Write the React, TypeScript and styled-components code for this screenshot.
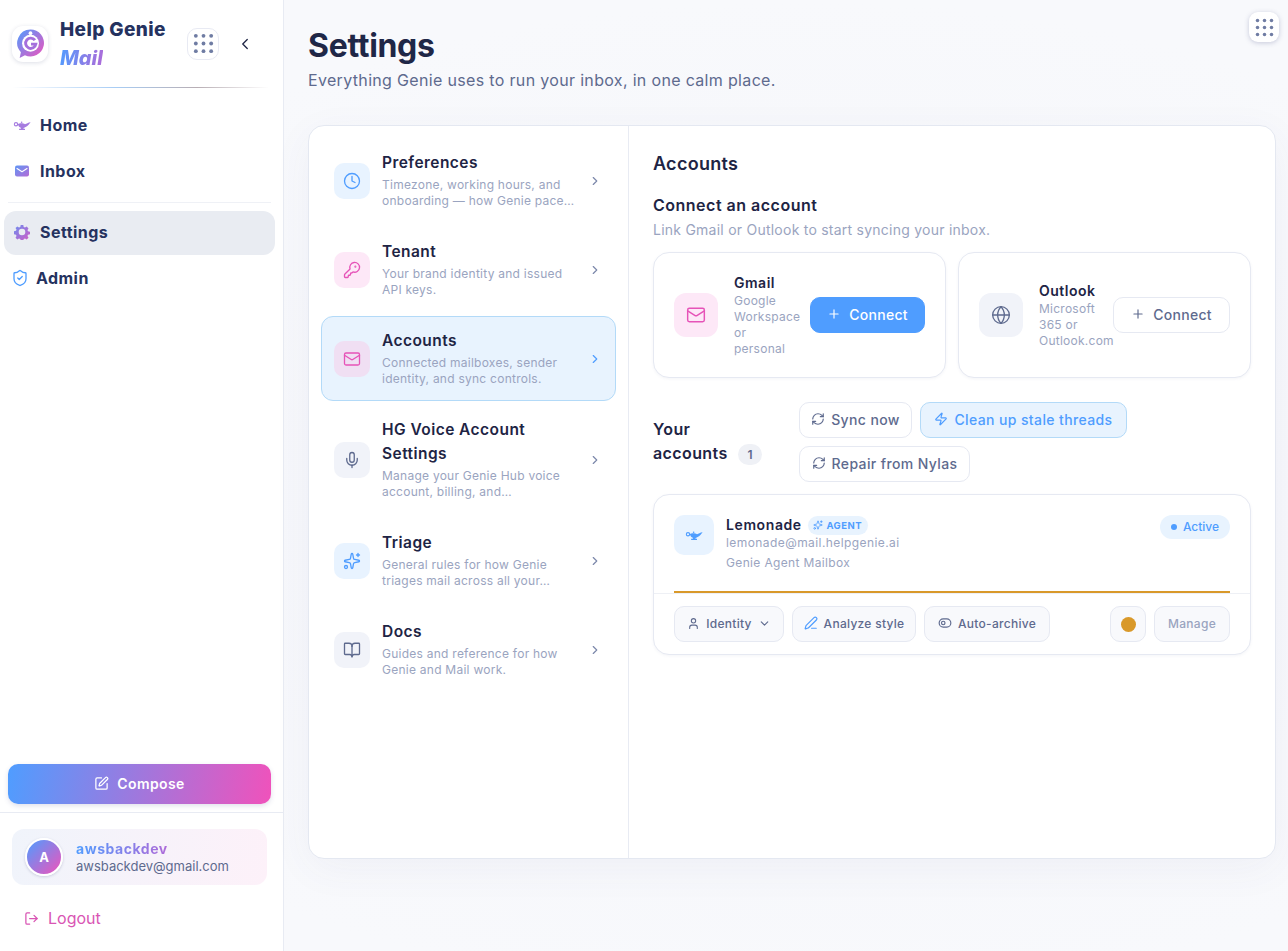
import React from "react";
import styled, { createGlobalStyle, css } from "styled-components";
import {
  BookOpen, ChevronDown, ChevronLeft, ChevronRight, Clock, Globe, KeyRound, LogOut, Mail, Mic,
  PenLine, Plus, RefreshCw, ShieldCheck, Sparkles, SquarePen, ToggleLeft, User, Zap,
} from "lucide-react";

const GlobalStyle = createGlobalStyle`
  html, body { margin: 0; padding: 0; background: #f8f9fc; }
  body { font-family: "Inter", "Liberation Sans", sans-serif; color: #1e2444; }
  * { box-sizing: border-box; }
`;

const gradientText = css`
  background: linear-gradient(100deg, #4f9dff, #b06ad8);
  -webkit-background-clip: text;
  background-clip: text;
  color: transparent;
`;

const Page = styled.div`
  display: flex;
  width: 1288px;
  height: 951px;
  overflow: hidden;
  position: relative;
  background: radial-gradient(900px 500px at 800px 500px, #f4f5fa 0%, #f8f9fc 100%);
`;
const Sidebar = styled.aside`
  width: 284px;
  flex: none;
  display: flex;
  flex-direction: column;
  background: #fff;
  border-right: 1px solid #e8ebf3;
`;
const BrandRow = styled.div`
  height: 87px;
  display: flex;
  align-items: center;
  padding-left: 12px;
`;
const LogoBox = styled.div`
  width: 36px;
  height: 36px;
  border-radius: 11px;
  background: #fff;
  box-shadow: 0 1px 4px rgba(40, 50, 100, 0.16);
  display: flex;
  align-items: center;
  justify-content: center;
  flex: none;
`;
const BrandText = styled.div`
  width: 115px;
  margin-left: 12px;
  display: flex;
  flex-direction: column;
  gap: 2px;
`;
const BrandName = styled.div`
  font-size: 19px;
  line-height: 26px;
  font-weight: 800;
  color: #25325f;
  letter-spacing: 0.4px;
  white-space: nowrap;
`;
const BrandSub = styled.div`
  font-size: 20px;
  line-height: 26px;
  font-weight: 800;
  font-style: italic;
  ${gradientText}
  width: max-content;
`;
const GridButton = styled.button`
  width: 32px;
  height: 32px;
  margin-left: 12px;
  padding: 0;
  border-radius: 10px;
  border: 1px solid #e8eaf3;
  background: #fff;
  color: #6f7ca3;
  display: flex;
  align-items: center;
  justify-content: center;
  flex: none;
`;
const BackButton = styled.button`
  width: 28px;
  height: 28px;
  margin-left: 12px;
  padding: 0;
  border: 0;
  background: none;
  color: #1e2444;
  display: flex;
  align-items: center;
  justify-content: center;
`;
const BrandRule = styled.div`
  height: 1px;
  margin: 0 14px 0 12px;
  background: linear-gradient(90deg, transparent, #a8cdf5 40%, #b8aeb4 72%, transparent);
`;
const Nav = styled.nav`
  display: flex;
  flex-direction: column;
  padding-top: 15px;
`;
const NavItem = styled.a<{ $active?: boolean; $top?: number }>`
  width: 271px;
  height: 44px;
  margin: ${(p) => p.$top ?? 0}px 0 0 4px;
  padding-left: 10px;
  padding-bottom: ${(p) => (p.$active ? 2 : 0)}px;
  border-radius: 12px;
  display: flex;
  align-items: center;
  gap: 10px;
  font-size: 16px;
  font-weight: 700;
  letter-spacing: 0.45px;
  color: #25325f;
  background: ${(p) => (p.$active ? "#e9ecf2" : "transparent")};
  & svg { flex: none; }
`;
const FixedIcon = styled.span<{ $width: number; $color?: string }>`
  width: ${(p) => p.$width}px;
  display: flex;
  justify-content: center;
  color: ${(p) => p.$color ?? "inherit"};
`;
const NavRule = styled.div`
  height: 1px;
  margin: 9px 12px 8px 8px;
  background: #eff1f6;
`;
const SideFooter = styled.div`
  margin-top: auto;
  display: flex;
  flex-direction: column;
`;
const ComposeButton = styled.button`
  height: 40px;
  margin: 0 12px 8px 8px;
  padding: 0 0 2px;
  border: 0;
  border-radius: 10px;
  background: linear-gradient(100deg, #4f9dff, #f052bb);
  box-shadow: 0 2px 5px rgba(60, 70, 130, 0.16);
  color: #fff;
  font: 600 14px "Inter", sans-serif;
  letter-spacing: 0.4px;
  display: flex;
  align-items: center;
  justify-content: center;
  gap: 8px;
`;
const FooterBlock = styled.div`
  border-top: 1px solid #e8ebf3;
  padding: 16px 16px 13px 12px;
`;
const UserCard = styled.div`
  height: 56px;
  border-radius: 12px;
  padding-left: 13px;
  display: flex;
  align-items: center;
  gap: 13px;
  background: linear-gradient(100deg, #f0f4fb, #fdf1f9);
`;
const Avatar = styled.div`
  width: 38px;
  height: 38px;
  border-radius: 50%;
  border: 2px solid #fff;
  box-shadow: 0 1px 3px rgba(40, 50, 100, 0.2);
  background: linear-gradient(135deg, #4f9dff, #f052bb);
  color: #fff;
  font-size: 13px;
  font-weight: 700;
  display: flex;
  align-items: center;
  justify-content: center;
  flex: none;
`;
const UserName = styled.div`
  font-size: 14px;
  line-height: 18px;
  font-weight: 700;
  letter-spacing: 0.55px;
  ${gradientText}
  width: max-content;
`;
const UserMail = styled.div`
  font-size: 13px;
  line-height: 17px;
  color: #5e6a8e;
`;
const LogoutRow = styled.a`
  height: 40px;
  margin-top: 13px;
  padding-left: 12px;
  display: flex;
  align-items: center;
  gap: 9px;
  font-size: 16px;
  color: #d955b4;
`;
const Main = styled.main`
  flex: 1;
  min-width: 0;
  padding: 26px 12px 0 24px;
`;
const Title = styled.h1`
  margin: 0;
  font-size: 32px;
  line-height: 40px;
  font-weight: 700;
  letter-spacing: -0.3px;
  color: #1f2747;
`;
const Subtitle = styled.p`
  margin: 2px 0 0;
  font-size: 16px;
  line-height: 24px;
  letter-spacing: 0.33px;
  color: #5e6a8e;
`;
const SettingsCard = styled.section`
  margin-top: 33px;
  height: 734px;
  display: grid;
  grid-template-columns: 320px 1fr;
  background: #fff;
  border: 1px solid #e4e8f1;
  border-radius: 16px;
  box-shadow: 0 10px 40px rgba(70, 80, 140, 0.05);
`;
const SectionList = styled.div`
  padding: 12px;
  border-right: 1px solid #e8ebf3;
  display: flex;
  flex-direction: column;
  gap: 4px;
`;
const SectionItem = styled.a<{ $active?: boolean }>`
  display: flex;
  align-items: center;
  gap: 12px;
  padding: 13.5px 12px;
  border-radius: 12px;
  border: 1px solid ${(p) => (p.$active ? "#b3daf8" : "transparent")};
  background: ${(p) => (p.$active ? "#e8f3fe" : "transparent")};
`;
type Tone = "blue" | "pink" | "gray" | "pinkActive";
const toneBg: Record<Tone, string> = { blue: "#e8f3ff", pink: "#fde8f7", gray: "#f1f3f9", pinkActive: "#f0dff3" };
const toneFg: Record<Tone, string> = { blue: "#4f9dff", pink: "#e653b8", gray: "#5e6a8e", pinkActive: "#e653b8" };
const IconTile = styled.div<{ $tone: Tone; $size: number; $radius: number }>`
  width: ${(p) => p.$size}px;
  height: ${(p) => p.$size}px;
  border-radius: ${(p) => p.$radius}px;
  background: ${(p) => toneBg[p.$tone]};
  color: ${(p) => toneFg[p.$tone]};
  display: flex;
  align-items: center;
  justify-content: center;
  flex: none;
`;
const SectionText = styled.div`
  flex: 1;
  min-width: 0;
`;
const SectionTitle = styled.div`
  margin: -2px 0 2px;
  font-size: 15.5px;
  line-height: 24px;
  font-weight: 600;
  letter-spacing: 0.45px;
  color: #1e2444;
  white-space: nowrap;
`;
const Desc = styled.div`
  font-size: 12px;
  line-height: 16px;
  letter-spacing: 0.25px;
  color: #9aa4c0;
  white-space: nowrap;
`;
const Chevron = styled.div<{ $active?: boolean }>`
  color: ${(p) => (p.$active ? "#4f9dff" : "#7c88ab")};
  display: flex;
  flex: none;
  margin-right: 1px;
`;
const Detail = styled.div`
  padding: 24px;
`;
const DetailTitle = styled.h2`
  margin: 0;
  font-size: 18px;
  line-height: 28px;
  font-weight: 600;
  letter-spacing: 0.3px;
  color: #1e2444;
`;
const GroupTitle = styled.h3`
  margin: 15px 0 0;
  font-size: 16px;
  line-height: 24px;
  font-weight: 600;
  letter-spacing: 0.5px;
  color: #1e2444;
`;
const GroupHint = styled.p`
  margin: 3px 0 0;
  font-size: 14px;
  line-height: 20px;
  letter-spacing: 0.24px;
  color: #9aa4c0;
`;
const ProviderGrid = styled.div`
  margin-top: 12px;
  display: grid;
  grid-template-columns: 293px 293px;
  gap: 12px;
`;
const ProviderCard = styled.div`
  height: 126px;
  border: 1px solid #e6e9f2;
  border-radius: 16px;
  background: #fff;
  padding: 0 20px;
  display: flex;
  align-items: center;
  gap: 16px;
  box-shadow: 0 1px 3px rgba(70, 80, 140, 0.06);
`;
const ProviderText = styled.div`
  width: 60px;
  flex: 1;
  min-width: 0;
`;
const ProviderName = styled.div`
  font-size: 14px;
  line-height: 20px;
  font-weight: 600;
  letter-spacing: 0.5px;
  color: #1e2444;
`;
const ConnectButton = styled.button<{ $primary?: boolean; $width: number }>`
  width: ${(p) => p.$width}px;
  height: 36px;
  flex: none;
  padding: 0 0 2px;
  border-radius: 10px;
  border: 1px solid ${(p) => (p.$primary ? "#4f9dff" : "#e6e9f2")};
  background: ${(p) => (p.$primary ? "#4f9dff" : "#fff")};
  color: ${(p) => (p.$primary ? "#fff" : "#5e6a8e")};
  font: 500 14px "Inter", sans-serif;
  letter-spacing: 0.3px;
  display: flex;
  align-items: center;
  justify-content: center;
  gap: 8px;
`;
const AccountsHead = styled.div`
  margin-top: 24px;
  display: flex;
  align-items: center;
`;
const AccountsLabel = styled.div`
  width: 85px;
  margin-bottom: 2px;
  font-size: 16px;
  line-height: 24px;
  font-weight: 600;
  letter-spacing: 0.4px;
  color: #1e2444;
`;
const CountBadge = styled.span`
  width: 24px;
  height: 21px;
  margin: 24px 37px 0 0;
  border-radius: 11px;
  background: #eff1f6;
  color: #5e6a8e;
  font-size: 12px;
  font-weight: 600;
  display: flex;
  align-items: center;
  justify-content: center;
  flex: none;
`;
const ActionWrap = styled.div`
  flex: 1;
  display: flex;
  flex-wrap: wrap;
  gap: 8px;
`;
const ActionButton = styled.button<{ $accent?: boolean; $width: number }>`
  height: 36px;
  width: ${(p) => p.$width}px;
  border-radius: 10px;
  border: 1px solid ${(p) => (p.$accent ? "#b3daf8" : "#e6e9f2")};
  background: ${(p) => (p.$accent ? "#e8f3fe" : "#fff")};
  color: ${(p) => (p.$accent ? "#4f9dff" : "#5e6a8e")};
  font: 500 14px "Inter", sans-serif;
  letter-spacing: 0.38px;
  padding: 0 0 2px;
  display: flex;
  align-items: center;
  justify-content: center;
  gap: 6px;
`;
const AccountCard = styled.div`
  margin-top: 12px;
  border: 1px solid #e6e9f2;
  border-radius: 16px;
  background: #fff;
  box-shadow: 0 1px 3px rgba(70, 80, 140, 0.06);
`;
const AccountTop = styled.div`
  height: 96px;
  padding: 20px 20px 0;
  display: flex;
  align-items: flex-start;
  gap: 12px;
`;
const AccountInfo = styled.div`
  flex: 1;
  min-width: 0;
`;
const NameRow = styled.div`
  display: flex;
  align-items: center;
  gap: 6px;
  height: 20px;
  margin-bottom: -1px;
`;
const AccountName = styled.span`
  font-size: 14px;
  font-weight: 600;
  letter-spacing: 0.6px;
  padding-bottom: 1px;
  color: #1e2444;
`;
const AgentTag = styled.span`
  height: 19px;
  width: 60px;
  border-radius: 10px;
  background: #e8f3fe;
  color: #4f9dff;
  font-size: 9.5px;
  font-weight: 700;
  letter-spacing: 0.5px;
  display: flex;
  align-items: center;
  justify-content: center;
  gap: 3px;
`;
const AccountLine = styled.div`
  font-size: 12px;
  line-height: 18px;
  color: #9aa4c0;
  letter-spacing: 0.42px;
  & + & { margin-top: 2px; letter-spacing: 0.35px; }
`;
const ActivePill = styled.span`
  width: 70px;
  height: 24px;
  border-radius: 12px;
  background: #e8f3fe;
  color: #4f9dff;
  font-size: 12px;
  font-weight: 500;
  padding-bottom: 1px;
  display: flex;
  align-items: center;
  justify-content: center;
  gap: 6px;
`;
const ActiveDot = styled.span`
  width: 6px;
  height: 6px;
  border-radius: 50%;
  background: #4f9dff;
`;
const ProgressLine = styled.div`
  height: 2px;
  margin: 0 20px;
  background: #d9992a;
`;
const AccountFooter = styled.div`
  border-top: 1px solid #eef0f5;
  padding: 12px 20px;
  display: flex;
  align-items: center;
  gap: 8px;
`;
const ChipButton = styled.button<{ $width: number; $muted?: boolean }>`
  width: ${(p) => p.$width}px;
  height: 36px;
  flex: none;
  padding: 0 0 2px;
  border-radius: 10px;
  border: 1px solid #e6e9f2;
  background: #f8f9fc;
  color: ${(p) => (p.$muted ? "#9aa4c0" : "#5e6a8e")};
  font: 500 12px "Inter", sans-serif;
  letter-spacing: 0.28px;
  display: flex;
  align-items: center;
  justify-content: center;
  gap: 6px;
`;
const Spacer = styled.div`
  flex: 1;
`;
const Swatch = styled.span`
  width: 15px;
  height: 15px;
  margin-top: 2px;
  border-radius: 50%;
  background: #d9992a;
`;
const FloatingGrid = styled.button`
  position: absolute;
  top: 12px;
  right: 9px;
  width: 30px;
  height: 30px;
  padding: 0;
  border: 0;
  border-radius: 9px;
  background: #fff;
  color: #6f7ca3;
  box-shadow: 0 1px 5px rgba(50, 60, 120, 0.25);
  display: flex;
  align-items: center;
  justify-content: center;
`;

const Dots = ({ size }: { size: number }) => (
  <svg width={size} height={size} viewBox="0 0 18 18" fill="currentColor">
    {[3, 9, 15].flatMap((y) => [3, 9, 15].map((x) => <circle key={`${x}-${y}`} cx={x} cy={y} r="1.5" />))}
  </svg>
);

const Logo = () => (
  <svg width="31" height="31" viewBox="0 0 30 30">
    <defs>
      <linearGradient id="logoG" x1="0" y1="0" x2="1" y2="1">
        <stop offset="0" stopColor="#4f9dff" />
        <stop offset="1" stopColor="#f052bb" />
      </linearGradient>
    </defs>
    <path d="M15 1.5a13 13 0 1 1-5.4 24.8L4.5 29l1.2-5.6A13 13 0 0 1 15 1.5z" fill="url(#logoG)" />
    <circle cx="15" cy="14.800" r="8.200" fill="#fff" />
    <circle cx="15" cy="5" r="1.800" fill="#fff" />
    <path d="M19.300 11.800a5 5 0 1 0 .9 3.800h-4.700" fill="none" stroke="#a56fdc" strokeWidth="2.800" />
  </svg>
);

const Lamp = ({ size, color }: { size: number; color: string }) => (
  <svg width={size} height={size} viewBox="0 0 24 24" fill={color}>
    <circle cx="11.500" cy="8.300" r="1.100" />
    <circle cx="4" cy="11" r="2.200" fill="none" stroke={color} strokeWidth="1.500" />
    <path d="M6.500 10.800C8.500 9.400 13.500 9.300 16 11c2-.8 4.200-2.600 7.500-2.800-1.800 2.200-3.600 5.200-7.300 6.900-1 .5-1.700.6-2.200.9v.9h2v1.800H8.200V16.900h2.300v-1.100C8.500 15.200 6.800 13.200 6.500 10.800z" />
  </svg>
);

const InboxGlyph = () => (
  <svg width="16" height="16" viewBox="0 0 16 16">
    <defs>
      <linearGradient id="inboxG" x1="0" y1="0" x2="1" y2="1">
        <stop offset="0" stopColor="#5f97f5" />
        <stop offset="1" stopColor="#b56bd6" />
      </linearGradient>
    </defs>
    <rect x="1" y="2.500" width="14" height="11" rx="2" fill="url(#inboxG)" />
    <path d="M3 5.500l5 3.200 5-3.200" fill="none" stroke="#fff" strokeWidth="1.100" strokeLinecap="round" strokeLinejoin="round" />
  </svg>
);

const GearGlyph = () => (
  <svg width="16" height="16" viewBox="0 0 16 16">
    <defs>
      <linearGradient id="gearG" x1="0" y1="0" x2="1" y2="1">
        <stop offset="0" stopColor="#6c8df0" />
        <stop offset="1" stopColor="#d35cc4" />
      </linearGradient>
    </defs>
    <path
      d="M6.700 1h2.600l.4 1.900 1.300.6 1.700-1 1.800 1.900-1 1.600.5 1.300 2 .4v2.600l-2 .4-.5 1.300 1 1.700-1.800 1.800-1.700-1-1.300.5-.4 2H6.700l-.4-2-1.300-.5-1.700 1-1.800-1.800 1-1.700-.5-1.300-2-.4V7.200l2-.4.500-1.300-1-1.600L3.300 2.500l1.700 1 1.300-.6L6.700 1zM8 4.700a3.300 3.300 0 1 0 0 6.600 3.300 3.300 0 0 0 0-6.600z"
      fill="url(#gearG)"
      fillRule="evenodd"
    />
  </svg>
);

const sections = [
  { title: ["Preferences"], desc: ["Timezone, working hours, and", "onboarding — how Genie pace…"], tone: "blue" as Tone, Icon: Clock },
  { title: ["Tenant"], desc: ["Your brand identity and issued", "API keys."], tone: "pink" as Tone, Icon: KeyRound },
  { title: ["Accounts"], desc: ["Connected mailboxes, sender", "identity, and sync controls."], tone: "pinkActive" as Tone, Icon: Mail, active: true },
  { title: ["HG Voice Account", "Settings"], desc: ["Manage your Genie Hub voice", "account, billing, and…"], tone: "gray" as Tone, Icon: Mic },
  { title: ["Triage"], desc: ["General rules for how Genie", "triages mail across all your…"], tone: "blue" as Tone, Icon: Sparkles },
  { title: ["Docs"], desc: ["Guides and reference for how", "Genie and Mail work."], tone: "gray" as Tone, Icon: BookOpen },
];

const Lines = ({ items }: { items: string[] }) => (
  <>
    {items.map((t) => (
      <div key={t}>{t}</div>
    ))}
  </>
);

export default function App() {
  return (
    <Page>
      <GlobalStyle />
      <Sidebar>
        <BrandRow>
          <LogoBox><Logo /></LogoBox>
          <BrandText>
            <BrandName>Help Genie</BrandName>
            <BrandSub>Mail</BrandSub>
          </BrandText>
          <GridButton aria-label="Apps"><Dots size={23} /></GridButton>
          <BackButton aria-label="Collapse"><ChevronLeft size={18} strokeWidth={1.75} /></BackButton>
        </BrandRow>
        <BrandRule />
        <Nav>
          <NavItem><FixedIcon $width={16}><Lamp size={18} color="#a67ce0" /></FixedIcon>Home</NavItem>
          <NavItem $top={2}><InboxGlyph />Inbox</NavItem>
          <NavRule />
          <NavItem $active><GearGlyph />Settings</NavItem>
          <NavItem $top={1}><FixedIcon $width={12} $color="#4f9dff"><ShieldCheck size={18} strokeWidth={1.75} /></FixedIcon>Admin</NavItem>
        </Nav>
        <SideFooter>
          <ComposeButton><SquarePen size={15} />Compose</ComposeButton>
          <FooterBlock>
            <UserCard>
              <Avatar>A</Avatar>
              <div>
                <UserName>awsbackdev</UserName>
                <UserMail>awsbackdev@gmail.com</UserMail>
              </div>
            </UserCard>
            <LogoutRow><LogOut size={15} />Logout</LogoutRow>
          </FooterBlock>
        </SideFooter>
      </Sidebar>
      <Main>
        <Title>Settings</Title>
        <Subtitle>Everything Genie uses to run your inbox, in one calm place.</Subtitle>
        <SettingsCard>
          <SectionList>
            {sections.map(({ title, desc, tone, Icon, active }) => (
              <SectionItem key={title[0]} $active={active}>
                <IconTile $tone={tone} $size={36} $radius={10}><Icon size={18} strokeWidth={1.75} /></IconTile>
                <SectionText>
                  <SectionTitle><Lines items={title} /></SectionTitle>
                  <Desc><Lines items={desc} /></Desc>
                </SectionText>
                <Chevron $active={active}><ChevronRight size={14} /></Chevron>
              </SectionItem>
            ))}
          </SectionList>
          <Detail>
            <DetailTitle>Accounts</DetailTitle>
            <GroupTitle>Connect an account</GroupTitle>
            <GroupHint>Link Gmail or Outlook to start syncing your inbox.</GroupHint>
            <ProviderGrid>
              <ProviderCard>
                <IconTile $tone="pink" $size={44} $radius={12}><Mail size={20} strokeWidth={1.75} /></IconTile>
                <ProviderText>
                  <ProviderName>Gmail</ProviderName>
                  <Desc><Lines items={["Google", "Workspace", "or", "personal"]} /></Desc>
                </ProviderText>
                <ConnectButton $primary $width={115}><Plus size={14} />Connect</ConnectButton>
              </ProviderCard>
              <ProviderCard>
                <IconTile $tone="gray" $size={44} $radius={12}><Globe size={20} strokeWidth={1.6} /></IconTile>
                <ProviderText>
                  <ProviderName>Outlook</ProviderName>
                  <Desc><Lines items={["Microsoft", "365 or", "Outlook.com"]} /></Desc>
                </ProviderText>
                <ConnectButton $width={117}><Plus size={14} />Connect</ConnectButton>
              </ProviderCard>
            </ProviderGrid>
            <AccountsHead>
              <AccountsLabel>Your accounts</AccountsLabel>
              <CountBadge>1</CountBadge>
              <ActionWrap>
                <ActionButton $width={113}><RefreshCw size={14} />Sync now</ActionButton>
                <ActionButton $accent $width={207}><Zap size={14} />Clean up stale threads</ActionButton>
                <ActionButton $width={171}><RefreshCw size={14} />Repair from Nylas</ActionButton>
              </ActionWrap>
            </AccountsHead>
            <AccountCard>
              <AccountTop>
                <IconTile $tone="blue" $size={40} $radius={10}><Lamp size={18} color="#4f9dff" /></IconTile>
                <AccountInfo>
                  <NameRow>
                    <AccountName>Lemonade</AccountName>
                    <AgentTag><Sparkles size={10} />AGENT</AgentTag>
                  </NameRow>
                  <AccountLine>lemonade@mail.helpgenie.ai</AccountLine>
                  <AccountLine>Genie Agent Mailbox</AccountLine>
                </AccountInfo>
                <ActivePill><ActiveDot />Active</ActivePill>
              </AccountTop>
              <ProgressLine />
              <AccountFooter>
                <ChipButton $width={110}><User size={13} />Identity<ChevronDown size={13} /></ChipButton>
                <ChipButton $width={124}><PenLine size={14} color="#4f9dff" />Analyze style</ChipButton>
                <ChipButton $width={126}><ToggleLeft size={14} />Auto-archive</ChipButton>
                <Spacer />
                <ChipButton $width={36} aria-label="Colour"><Swatch /></ChipButton>
                <ChipButton $width={76} $muted>Manage</ChipButton>
              </AccountFooter>
            </AccountCard>
          </Detail>
        </SettingsCard>
      </Main>
      <FloatingGrid aria-label="Apps"><Dots size={21} /></FloatingGrid>
    </Page>
  );
}
